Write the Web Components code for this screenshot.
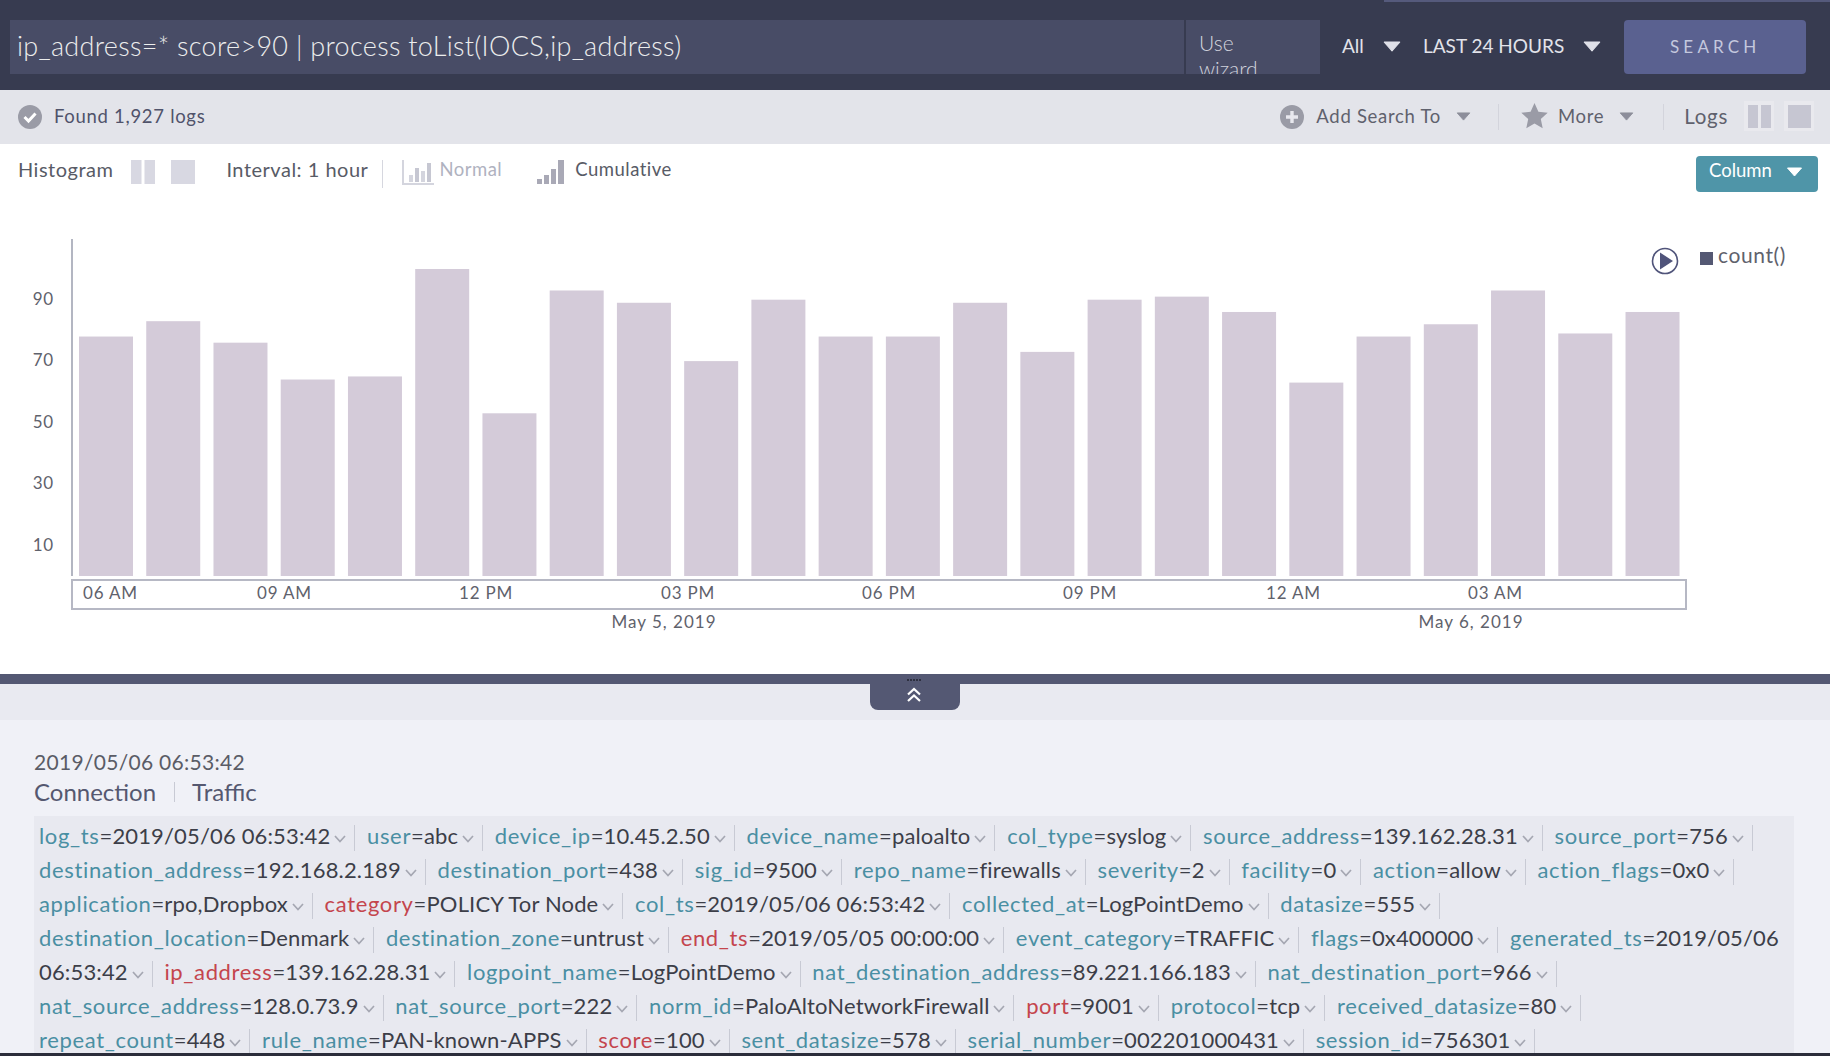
<!DOCTYPE html>
<html>
<head>
<meta charset="utf-8">
<title>Search</title>
<style>
  html, body { margin: 0; height: 100%; overflow: hidden; }
  body { font-family: Lato, "Open Sans", sans-serif; background: #fff; color: #50536b; }
  #app { display: flex; flex-direction: column; height: 1056px; }
</style>
</head>
<body>
<div id="app">
  <search-bar query="ip_address=* score>90 | process toList(IOCS,ip_address)"></search-bar>
  <result-bar count="1,927"></result-bar>
  <histogram-panel></histogram-panel>
  <split-handle></split-handle>
  <log-panel time="2019/05/06 06:53:42">
    <log-field name="log_ts" value="2019/05/06 06:53:42"></log-field>
    <log-field name="user" value="abc"></log-field>
    <log-field name="device_ip" value="10.45.2.50"></log-field>
    <log-field name="device_name" value="paloalto"></log-field>
    <log-field name="col_type" value="syslog"></log-field>
    <log-field name="source_address" value="139.162.28.31"></log-field>
    <log-field name="source_port" value="756"></log-field>
    <log-field name="destination_address" value="192.168.2.189"></log-field>
    <log-field name="destination_port" value="438"></log-field>
    <log-field name="sig_id" value="9500"></log-field>
    <log-field name="repo_name" value="firewalls"></log-field>
    <log-field name="severity" value="2"></log-field>
    <log-field name="facility" value="0"></log-field>
    <log-field name="action" value="allow"></log-field>
    <log-field name="action_flags" value="0x0"></log-field>
    <log-field name="application" value="rpo,Dropbox"></log-field>
    <log-field name="category" value="POLICY Tor Node" hot></log-field>
    <log-field name="col_ts" value="2019/05/06 06:53:42"></log-field>
    <log-field name="collected_at" value="LogPointDemo"></log-field>
    <log-field name="datasize" value="555"></log-field><br>
    <log-field name="destination_location" value="Denmark"></log-field>
    <log-field name="destination_zone" value="untrust"></log-field>
    <log-field name="end_ts" value="2019/05/05 00:00:00" hot></log-field>
    <log-field name="event_category" value="TRAFFIC"></log-field>
    <log-field name="flags" value="0x400000"></log-field>
    <log-field name="generated_ts" value="2019/05/06 06:53:42"></log-field>
    <log-field name="ip_address" value="139.162.28.31" hot></log-field>
    <log-field name="logpoint_name" value="LogPointDemo"></log-field>
    <log-field name="nat_destination_address" value="89.221.166.183"></log-field>
    <log-field name="nat_destination_port" value="966"></log-field><br>
    <log-field name="nat_source_address" value="128.0.73.9"></log-field>
    <log-field name="nat_source_port" value="222"></log-field>
    <log-field name="norm_id" value="PaloAltoNetworkFirewall"></log-field>
    <log-field name="port" value="9001" hot></log-field>
    <log-field name="protocol" value="tcp"></log-field>
    <log-field name="received_datasize" value="80"></log-field><br>
    <log-field name="repeat_count" value="448"></log-field>
    <log-field name="rule_name" value="PAN-known-APPS"></log-field>
    <log-field name="score" value="100" hot></log-field>
    <log-field name="sent_datasize" value="578"></log-field>
    <log-field name="serial_number" value="002201000431"></log-field>
    <log-field name="session_id" value="756301"></log-field>
  </log-panel>
</div>

<script>
// small triangle used by every dropdown
function caret(w, h, color) {
  return `<svg width="${w}" height="${h}" viewBox="0 0 16 10" style="display:block;flex:none"><path d="M1 1h14L8 9z" fill="${color}" stroke="${color}" stroke-linejoin="round"/></svg>`;
}

class SearchBar extends HTMLElement {
  constructor() {
    super();
    this.attachShadow({ mode: "open" });
  }
  connectedCallback() {
    this.shadowRoot.innerHTML = `
    <style>
      :host { display: flex; position: relative; flex: none; height: 90px; box-sizing: border-box; padding: 20px 24px 16px 10px; background: #373b50; color: #e2e3ea; }
      :host::before { content: ""; position: absolute; top: 0; right: 0; width: 446px; height: 2px; background: #555a7c; }
      .query { flex: none; width: 1174px; box-sizing: border-box; padding: 0 7px; background: #484c66; font-size: 27px; font-weight: 300; letter-spacing: .3px; line-height: 52px; color: #eceded; white-space: nowrap; }
      .wizard { flex: none; width: 134px; height: 54px; margin-left: 2px; box-sizing: border-box; padding: 10px 40px 0 13px; background: #484c66; font-size: 21px; font-weight: 300; line-height: 26px; color: #d0d2dc; overflow: hidden; }
      .drop { display: flex; flex: none; align-items: center; font-size: 19px; height: 50px; white-space: nowrap; }
      .all { margin-left: 22px; gap: 19px; width: 60px; }
      .all svg, .range svg { margin-top: 3px; }
      .range { margin-left: 21px; gap: 19px; }
      button { all: unset; flex: none; width: 182px; height: 54px; margin-left: 23px; box-sizing: border-box; text-align: center; background: #5a6190; border-radius: 4px; font-size: 17px; letter-spacing: 4.200px; color: #c4c8de; line-height: 50px; }
    </style>
    <div class="query">${this.getAttribute("query").replace(/>/g, "&gt;")}</div>
    <div class="wizard">Use wizard</div>
    <div class="drop all"><span>All</span>${caret(18, 11, "#dfe0e8")}</div>
    <div class="drop range"><span>LAST 24 HOURS</span>${caret(18, 11, "#dfe0e8")}</div>
    <button>SEARCH</button>`;
  }
}

class ResultBar extends HTMLElement {
  constructor() {
    super();
    this.attachShadow({ mode: "open" });
  }
  connectedCallback() {
    this.shadowRoot.innerHTML = `
    <style>
      :host { display: flex; align-items: center; flex: none; height: 54px; padding: 0 16px 2px 18px; box-sizing: border-box; background: #e3e4ea; font-size: 18.500px; letter-spacing: .7px; color: #5f616d; }
      .found { margin-left: 12px; color: #50536b; flex: 1; }
      svg { display: block; flex: none; }
      .sep { width: 1px; height: 26px; background: #d3d4dc; margin: 2px 22px 0 27px; }
      .arrow { margin-left: 15px; }
      .txt { margin-left: 12px; }
      .more { margin-left: 10px; }
      .logs { font-size: 20.500px; }
      .tog { width: 30px; height: 30px; background: #e9e9ee; display: flex; align-items: center; justify-content: center; margin-left: 10px; }
    </style>
    <svg width="24" height="24" viewBox="0 0 24 24" style="margin-top:2px"><circle cx="12" cy="12" r="12" fill="#9a9ba6"/><path d="M6.500 12l4 4 7-7.500" fill="none" stroke="#fff" stroke-width="3"/></svg>
    <span class="found">Found ${this.getAttribute("count")} logs</span>
    <svg width="24" height="24" viewBox="0 0 24 24" style="margin-top:2px"><circle cx="12" cy="12" r="12" fill="#9a9ba6"/><path d="M12 6v12M6 12h12" stroke="#e8e8ee" stroke-width="3.400"/></svg>
    <span class="txt">Add Search To</span>
    <span class="arrow">${caret(15, 9, "#8d8e9b")}</span>
    <i class="sep"></i>
    <svg width="27" height="26" viewBox="0 0 27 26"><path d="M13.500 0l3.900 8.700 9.300 1-6.900 6.400 1.900 9.200-8.200-4.700-8.200 4.700 1.900-9.200L.3 9.700l9.300-1z" fill="#9a9ba6"/></svg>
    <span class="txt more">More</span>
    <span class="arrow">${caret(15, 9, "#8d8e9b")}</span>
    <i class="sep" style="margin-left:29px;margin-right:20px"></i>
    <span class="logs">Logs</span>
    <span class="tog" style="margin-left:16px"><svg width="23" height="23"><rect width="10" height="23" fill="#c6c6d2"/><rect x="13" width="10" height="23" fill="#c6c6d2"/></svg></span>
    <span class="tog"><svg width="23" height="23"><rect width="23" height="23" fill="#c6c6d2"/></svg></span>`;
  }
}

class HistogramPanel extends HTMLElement {
  constructor() {
    super();
    this.attachShadow({ mode: "open" });
  }
  chart() {
    const values = [78,83,76,64,65,100,53,93,89,70,90,78,78,89,73,90,91,86,63,78,82,93,79,86];
    const bars = values.map((v, i) => {
      const h = v * 3.07;
      return `<rect x="${79 + i * 67.24}" y="${576 - h}" width="54" height="${h}" fill="#d4cbd9"/>`;
    }).join("");
    const yLabels = [[10,551],[30,489],[50,428],[70,366],[90,305]].map(([t, y]) =>
      `<text x="54" y="${y}" text-anchor="end">${t}</text>`).join("");
    const xLabels = [["06 AM",83],["09 AM",257],["12 PM",459],["03 PM",661],["06 PM",862],["09 PM",1063],["12 AM",1266],["03 AM",1468]].map(([t, x]) =>
      `<text x="${x}" y="599">${t}</text>`).join("");
    return `
    <svg class="plot" width="1830" height="474" viewBox="0 200 1830 474">
      <rect x="71" y="239" width="2" height="337" fill="#b3b6c2"/>
      ${bars}
      <rect x="72" y="580" width="1614" height="29" fill="none" stroke="#b6b8c4" stroke-width="2"/>
      ${yLabels}
      ${xLabels}
      <text x="664" y="628" text-anchor="middle" class="date">May 5, 2019</text>
      <text x="1471" y="628" text-anchor="middle" class="date">May 6, 2019</text>
      <circle cx="1665" cy="261" r="12.500" fill="none" stroke="#50547a" stroke-width="1.600"/>
      <path d="M1660 252.500l13 8.500-13 8.500z" fill="#50547a"/>
      <rect x="1700" y="252" width="13" height="13" fill="#545873"/>
      <text x="1718" y="263" class="legend">count()</text>
    </svg>`;
  }
  connectedCallback() {
    this.shadowRoot.innerHTML = `
    <style>
      :host { display: block; flex: none; height: 530px; background: #fff; font-size: 20px; color: #585b66; }
      .tools { display: flex; align-items: flex-start; height: 56px; box-sizing: border-box; padding: 12px 12px 0 18px; }
      .tools > * { flex: none; }
      .lbl { line-height: 26px; letter-spacing: .5px; }
      .small { font-size: 18.500px; letter-spacing: .5px; }
      .ico { display: block; margin-top: 4px; }
      .sep { width: 1px; height: 28px; background: #d6d7df; margin: 4px 19px 0 14px; }
      .off { color: #b0b2bf; }
      .col { margin-left: auto; width: 122px; height: 36px; box-sizing: border-box; padding: 0 15px 9px 13px; display: flex; align-items: center; justify-content: space-between; background: #4f95a8; border-radius: 4px; color: #fff; font-size: 18.500px; }
      .col svg { margin-top: 5px; }
      svg.plot { display: block; }
      text { font-size: 17px; fill: #5f626c; letter-spacing: .8px; }
      text.date { letter-spacing: 1px; }
      text.legend { font-size: 21px; letter-spacing: .6px; }
    </style>
    <div class="tools">
      <span class="lbl">Histogram</span>
      <svg class="ico" style="margin-left:18px" width="24" height="24"><rect width="10.500" height="24" fill="#d8d8e2"/><rect x="13.500" width="10.500" height="24" fill="#d8d8e2"/></svg>
      <svg class="ico" style="margin-left:16px" width="24" height="24"><rect width="24" height="24" fill="#d8d8e2"/></svg>
      <span class="lbl" style="margin-left:31px">Interval: 1 hour</span>
      <i class="sep"></i>
      <svg class="ico" width="32" height="25"><path d="M1 0v24h31" fill="none" stroke="#d4d5de" stroke-width="2"/><rect x="7" y="15" width="4" height="7" fill="#d4d5de"/><rect x="13" y="8" width="4" height="14" fill="#c6c7d2"/><rect x="19" y="11" width="4" height="11" fill="#d4d5de"/><rect x="25" y="3" width="4" height="19" fill="#c6c7d2"/></svg>
      <span class="lbl small off" style="margin-left:5px">Normal</span>
      <svg class="ico" style="margin-left:35px" width="28" height="24"><rect y="19" width="5" height="5" fill="#a9a9b6"/><rect x="7" y="15" width="5" height="9" fill="#a9a9b6"/><rect x="14" y="9" width="5" height="15" fill="#a9a9b6"/><rect x="21" width="6" height="24" fill="#a9a9b6"/></svg>
      <span class="lbl small" style="margin-left:10px">Cumulative</span>
      <div class="col"><span>Column</span>${caret(17, 10, "#fff")}</div>
    </div>
    ${this.chart()}`;
  }
}

class SplitHandle extends HTMLElement {
  constructor() {
    super();
    this.attachShadow({ mode: "open" });
  }
  connectedCallback() {
    this.shadowRoot.innerHTML = `
    <style>
      :host { display: block; position: relative; flex: none; height: 46px; background: #e9eaf1; border-top: 10px solid #545873; box-sizing: border-box; }
      .tab { position: absolute; left: 870px; top: -10px; width: 90px; height: 36px; background: #545873; border-radius: 0 0 8px 8px; }
      svg { position: absolute; left: 36px; top: 5px; }
    </style>
    <div class="tab">
      <svg width="16" height="24" viewBox="0 0 16 24">
        <path d="M1 1h14" stroke="#2e3040" stroke-width="2" stroke-dasharray="2 1"/>
        <path d="M2 15.500l6-5.500 6 5.500M2 22l6-5.500 6 5.500" fill="none" stroke="#fff" stroke-width="2.200"/>
      </svg>
    </div>`;
  }
}

class LogPanel extends HTMLElement {
  constructor() {
    super();
    this.attachShadow({ mode: "open" });
  }
  connectedCallback() {
    this.shadowRoot.innerHTML = `
    <style>
      :host { display: block; flex: 1; min-height: 0; background: #f0f1f7; border-bottom: 3px solid #2b2d3a; padding: 29px 36px 0 34px; overflow: hidden; color: #50536b; }
      .time { line-height: 26px; color: #5a5c66; font-size: 21px; letter-spacing: .3px; }
      .tags { display: flex; align-items: center; line-height: 32px; font-size: 24px; color: #555870; margin-top: 1px; }
      .tags i { width: 1px; height: 20px; background: #c8cad4; margin: 0 17px 0 18px; }
      .body { margin-top: 8px; background: #e8e9f0; padding: 3px 4px 0 5px; font-size: 22px; line-height: 34px; height: 300px; }
    </style>
    <div class="time">${this.getAttribute("time")}</div>
    <div class="tags"><span>Connection</span><i></i><span>Traffic</span></div>
    <div class="body"><slot></slot></div>`;
  }
}

class LogField extends HTMLElement {
  constructor() {
    super();
    this.attachShadow({ mode: "open" });
  }
  connectedCallback() {
    const color = this.hasAttribute("hot") ? "#c4454d" : "#4a8fa3";
    this.shadowRoot.innerHTML = `
    <style>
      :host { display: inline; font-size: 22px; letter-spacing: .15px; color: #3c3e48; }
      .k { color: ${color}; letter-spacing: .65px; }
      svg { display: inline-block; margin: 0 8px 0 4px; vertical-align: 1px; }
      i { display: inline-block; width: 1px; height: 26px; background: #c8cad4; margin-right: 6px; vertical-align: -7px; }
    </style>
    <span class="k">${this.getAttribute("name")}</span>=${this.getAttribute("value")}<svg width="12" height="8" viewBox="0 0 12 8"><path d="M1 1l5 5.500L11 1" fill="none" stroke="#a5a7b2" stroke-width="1.700"/></svg><i></i>`;
  }
}

customElements.define("search-bar", SearchBar);
customElements.define("result-bar", ResultBar);
customElements.define("histogram-panel", HistogramPanel);
customElements.define("split-handle", SplitHandle);
customElements.define("log-panel", LogPanel);
customElements.define("log-field", LogField);
</script>
</body>
</html>
